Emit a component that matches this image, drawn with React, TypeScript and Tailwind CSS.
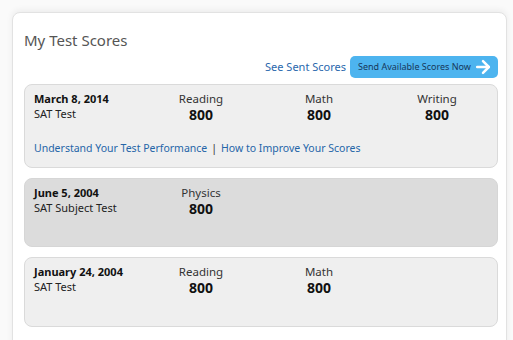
import { ArrowRight } from "lucide-react";

type Score = { label: string; value: string };

type TestRow = {
  date: string;
  name: string;
  scores: Score[];
  tone: "light" | "dark";
  links?: boolean;
};

const rows: TestRow[] = [
  {
    date: "March 8, 2014",
    name: "SAT Test",
    tone: "light",
    links: true,
    scores: [
      { label: "Reading", value: "800" },
      { label: "Math", value: "800" },
      { label: "Writing", value: "800" },
    ],
  },
  {
    date: "June 5, 2004",
    name: "SAT Subject Test",
    tone: "dark",
    scores: [{ label: "Physics", value: "800" }],
  },
  {
    date: "January 24, 2004",
    name: "SAT Test",
    tone: "light",
    scores: [
      { label: "Reading", value: "800" },
      { label: "Math", value: "800" },
    ],
  },
];

function ScoreCard({ row }: { row: TestRow }) {
  return (
    <div
      className={
        row.tone === "dark"
          ? "h-[69px] rounded-lg border border-[#d6d6d6] bg-[#dcdcdc] px-[9px] pt-[6px]"
          : row.links
            ? "h-[84px] rounded-lg border border-[#dadada] bg-[#efefef] px-[9px] pt-[6px]"
            : "h-[70px] rounded-lg border border-[#dadada] bg-[#efefef] px-[9px] pt-[6px]"
      }
    >
      <div className="grid grid-cols-[108px_118px_118px_118px]">
        <div>
          <div className="text-[11px] font-bold leading-[15px] text-[#111]">{row.date}</div>
          <div className="text-[11px] leading-[15px] text-[#222]">{row.name}</div>
        </div>
        {row.scores.map((s) => (
          <div key={s.label} className="flex flex-col items-center">
            <div className="text-[11.5px] leading-[15px] text-[#333]">{s.label}</div>
            <div className="text-[14px] font-bold leading-[17px] text-[#111]">{s.value}</div>
          </div>
        ))}
      </div>
      {row.links && (
        <div className="mt-[18px] text-[10.5px] leading-[15px] text-[#2565a8]">
          <span>Understand Your Test Performance</span>
          <span className="mx-[4px] text-[#333]">|</span>
          <span>How to Improve Your Scores</span>
        </div>
      )}
    </div>
  );
}

export default function App() {
  return (
    <div
      className="h-[340px] w-[513px] overflow-hidden bg-[#fafafa] pt-[12px] pl-[12px] pr-[6px]"
      style={{ fontFamily: '"Noto Sans", sans-serif' }}
    >
      <div className="h-[340px] rounded-t-lg border border-[#e2e2e2] bg-white pt-[17px] pl-[11px] pr-[8px] shadow-[0_-2px_6px_rgba(0,0,0,0.06)]">
        <h1 className="text-[15px] leading-[20px] font-normal text-[#555]">My Test Scores</h1>
        <div className="mt-[6px] flex items-center justify-end gap-[4px]">
          <a className="text-[11px] text-[#2a68ad]">See Sent Scores</a>
          <button className="flex h-[22px] w-[148px] items-center justify-between rounded-[5px] bg-[#4db4ef] pl-[8px] pr-[5px]">
            <span className="whitespace-nowrap text-[9px] text-[#17375a]">Send Available Scores Now</span>
            <ArrowRight className="h-[20px] w-[20px] shrink-0 text-white" strokeWidth={3} />
          </button>
        </div>
        <div className="mt-[6px] flex flex-col gap-[10px]">
          {rows.map((r) => (
            <ScoreCard key={r.date} row={r} />
          ))}
        </div>
      </div>
    </div>
  );
}
